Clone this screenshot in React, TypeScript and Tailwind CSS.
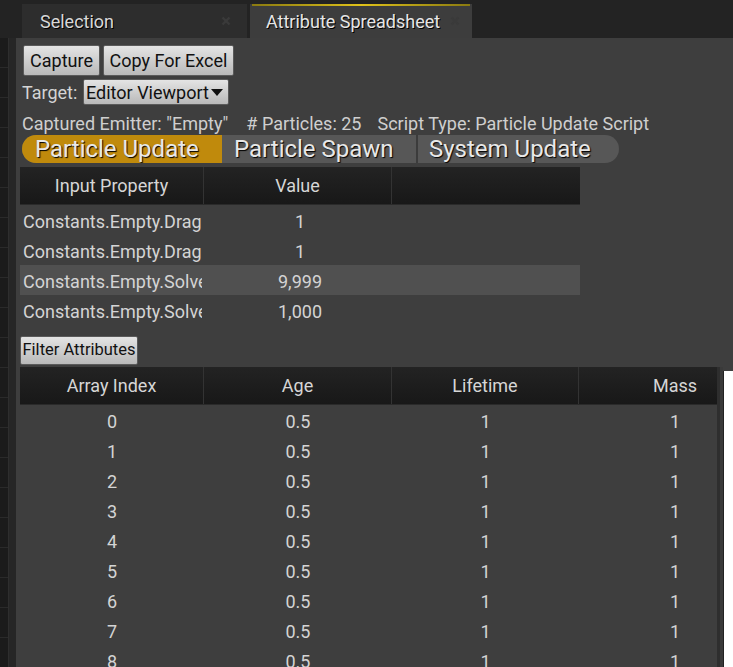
import React from 'react';

const font = { fontFamily: 'Roboto, "Noto Sans", sans-serif' };

const inputRows = [
  { name: 'Constants.Empty.Drag', value: '1' },
  { name: 'Constants.Empty.Drag', value: '1' },
  { name: 'Constants.Empty.Solver', value: '9,999', hl: true },
  { name: 'Constants.Empty.Solver', value: '1,000' },
];

const particles = Array.from({ length: 9 }, (_, i) => i);

const CloseX = () => (
  <svg width="10" height="10" viewBox="0 0 10 10" className="shrink-0">
    <path d="M1.5 1.5 L8.5 8.5 M8.5 1.5 L1.5 8.5" stroke="#3a3a3a" strokeWidth="2.4" />
  </svg>
);

const HeaderCell = ({ label, w, last }: { label: string; w: string; last?: boolean }) => (
  <div
    className={`${w} h-full flex items-center justify-center shrink-0 ${last ? '' : 'border-r border-[#333]'}`}
  >
    {label}
  </div>
);

const GreyButton = ({ children, className }: { children: React.ReactNode; className?: string }) => (
  <div
    className={`flex items-center justify-center whitespace-nowrap rounded-[2px] border border-[#5a5a5a] bg-gradient-to-b from-[#e4e4e4] to-[#b9b9b9] text-[#111] ${className ?? ''}`}
  >
    {children}
  </div>
);

export default function App() {
  return (
    <div className="w-[733px] h-[667px] overflow-hidden bg-[#232323] flex flex-col text-[#d4d4d4]" style={font}>
      {/* Tab strip */}
      <div className="h-[38px] shrink-0 flex items-end pl-[22px] gap-[3px]">
        <div className="w-[225px] h-[34px] bg-[#2d2d2d] flex items-center pl-[18px] pr-[16px] text-[18px] text-[#d8d8d8] [text-shadow:1px_1px_0_#000]">
          <span className="flex-1">Selection</span>
          <CloseX />
        </div>
        <div className="relative w-[222px] h-[34px] bg-[#3d3d3d] flex items-center pl-[16px] pr-[12px] text-[18px] text-[#e6e6e6] [text-shadow:1px_1px_0_#000]">
          <div className="absolute top-0 left-[2px] right-[2px] h-[2px] bg-gradient-to-r from-[#8a7a10] via-[#e0c21a] to-[#8a7a10]" />
          <span className="flex-1 whitespace-nowrap">Attribute Spreadsheet</span>
          <CloseX />
        </div>
      </div>

      {/* Body */}
      <div className="flex flex-1 min-h-0">
        {/* Left fragment of a neighbouring panel */}
        <div className="w-[9px] shrink-0 bg-[#1b1b1b] border-r border-[#2e2e2e] flex flex-col">
          {Array.from({ length: 22 }, (_, i) => (
            <div key={i} className="h-[30px] shrink-0 border-b border-[#2a2a2a]" />
          ))}
        </div>
        <div className="w-[7px] shrink-0 bg-[#262626]" />

        {/* Main panel */}
        <div className="flex-1 min-w-0 bg-[#3e3e3e] flex flex-col pl-[4px] overflow-hidden">
          <div className="flex gap-[3px] mt-[7px] pl-[3px] text-[18px]">
            <GreyButton className="w-[77px] h-[31px]">Capture</GreyButton>
            <GreyButton className="w-[131px] h-[31px]">Copy For Excel</GreyButton>
          </div>

          <div className="flex items-center mt-[3px] pl-[2px] h-[26px] text-[18px]">
            <span className="text-[#d4d4d4] w-[61px]">Target:</span>
            <GreyButton className="w-[146px] h-[26px] justify-start pl-[2px] gap-[1px]">
              <span>Editor Viewport</span>
              <svg width="14" height="9" viewBox="0 0 14 9" className="shrink-0">
                <path d="M1 1 L13 1 L7 8 Z" fill="#111" />
              </svg>
            </GreyButton>
          </div>

          <div className="h-[30px] flex items-end pb-[2px] pl-[2px] text-[18px] text-[#cfcfcf] leading-none whitespace-nowrap">
            <span>Captured Emitter: "Empty"</span>
            <span className="ml-[18px]"># Particles: 25</span>
            <span className="ml-[16px]">Script Type: Particle Update Script</span>
          </div>

          {/* Segmented control */}
          <div className="ml-[2px] w-[597px] h-[28px] flex rounded-[14px] overflow-hidden bg-[#575757] text-[24px] text-[#e8e8e8] [text-shadow:1px_1px_1px_#000] leading-none whitespace-nowrap">
            <div className="w-[200px] bg-[#c08a0c] flex items-center pl-[13px]">Particle Update</div>
            <div className="w-[196px] flex items-center pl-[12px] border-r-2 border-[#3c3c3c]">Particle Spawn</div>
            <div className="flex-1 flex items-center pl-[11px]">System Update</div>
          </div>

          {/* Input property table */}
          <div className="mt-[4px] w-[560px] flex flex-col text-[18px]">
            <div className="h-[38px] flex bg-gradient-to-b from-[#232323] to-[#181818] text-[#d6d6d6] border-b border-[#2a2a2a]">
              <HeaderCell label="Input Property" w="w-[184px]" />
              <HeaderCell label="Value" w="w-[188px]" />
              <div className="flex-1" />
            </div>
            {inputRows.map((r, i) => (
              <div key={i} className={`h-[30px] pt-[2px] flex items-center ${r.hl ? 'bg-[#505050]' : ''}`}>
                <div className="w-[182px] pl-[3px] overflow-hidden whitespace-nowrap">{r.name}</div>
                <div className="w-[196px] text-center">{r.value}</div>
              </div>
            ))}
          </div>

          <div className="mt-[11px] flex">
            <GreyButton className="w-[118px] h-[29px] text-[16.5px]">Filter Attributes</GreyButton>
          </div>

          {/* Particle table */}
          <div className="mt-[2px] flex flex-1 min-h-0 text-[18px]">
            <div className="w-[697px] shrink-0 flex flex-col overflow-hidden">
              <div className="h-[38px] shrink-0 flex bg-gradient-to-b from-[#232323] to-[#181818] text-[#d6d6d6] border-b border-[#2a2a2a]">
                <HeaderCell label="Array Index" w="w-[184px]" />
                <HeaderCell label="Age" w="w-[188px]" />
                <HeaderCell label="Lifetime" w="w-[187px]" />
                <HeaderCell label="Mass" w="w-[192px]" last />
              </div>
              {particles.map((p) => (
                <div key={p} className="h-[30px] pt-[2px] shrink-0 flex items-center">
                  <div className="w-[184px] text-center shrink-0">{p}</div>
                  <div className="w-[188px] text-center shrink-0">0.5</div>
                  <div className="w-[187px] text-center shrink-0">1</div>
                  <div className="w-[192px] text-center shrink-0">1</div>
                </div>
              ))}
            </div>
            <div className="w-[3px] shrink-0 bg-[#2e2e2e]" />
            <div className="w-[3px] shrink-0 bg-[#3a3a3a]" />
            <div className="flex-1 mt-[4px] bg-white border-l border-[#222]" />
          </div>
        </div>
      </div>
    </div>
  );
}
